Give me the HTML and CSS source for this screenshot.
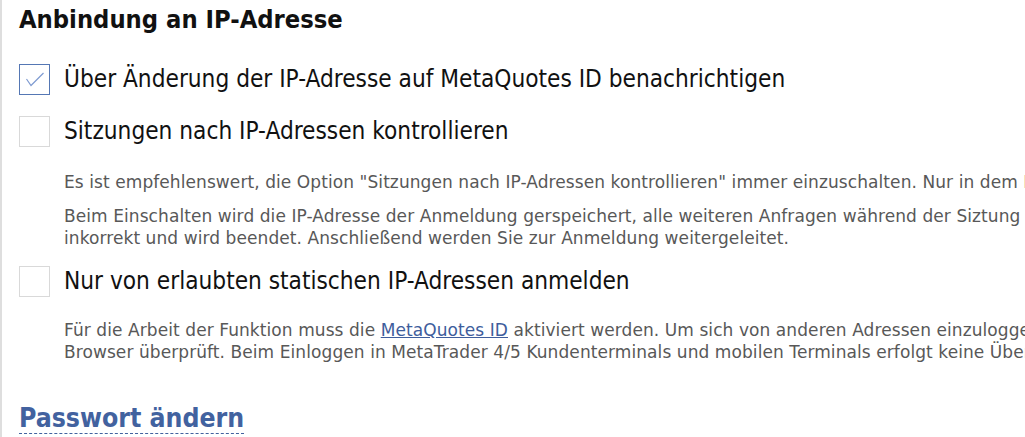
FILE: index.html
```html
<html>
<head>
<meta charset="utf-8">
<link rel="stylesheet" href="styles.css">
</head>
<body>
<div class="wrapper">
  <h2 class="section-title">Anbindung an IP-Adresse</h2>

  <div class="option">
    <span class="checkbox checked">
      <svg width="31" height="31" viewBox="0 0 31 31"><polyline points="7.5,15 12,21.5 24.5,9" fill="none" stroke="#7f9bd1" stroke-width="1.2"/></svg>
    </span>
    <span class="label">Über Änderung der IP-Adresse auf MetaQuotes ID benachrichtigen</span>
  </div>

  <div class="option">
    <span class="checkbox"></span>
    <span class="label">Sitzungen nach IP-Adressen kontrollieren</span>
  </div>

  <div class="hint first">
    <p>Es ist empfehlenswert, die Option "Sitzungen nach IP-Adressen kontrollieren" immer einzuschalten. Nur in dem Fall, wenn Ihr Provider die IP-Adresse ständig ändert, sollte sie ausgeschaltet werden.</p>
    <p>Beim Einschalten wird die IP-Adresse der Anmeldung gerspeichert, alle weiteren Anfragen während der Siztung von anderen IP-Adressen gelten als<br>inkorrekt und wird beendet. Anschließend werden Sie zur Anmeldung weitergeleitet.</p>
  </div>

  <div class="option">
    <span class="checkbox"></span>
    <span class="label">Nur von erlaubten statischen IP-Adressen anmelden</span>
  </div>

  <div class="hint last">
    <p>Für die Arbeit der Funktion muss die <a href="#">MetaQuotes ID</a> aktiviert werden. Um sich von anderen Adressen einzuloggen, wird eine Bestätigung<br>Browser überprüft. Beim Einloggen in MetaTrader 4/5 Kundenterminals und mobilen Terminals erfolgt keine Überprüfung.</p>
  </div>

  <h2 class="section-link"><span>Passwort ändern</span></h2>
</div>
</body>
</html>
```

FILE: styles.css
```css
html, body {
  margin: 0;
  overflow: hidden;
  background: #fff;
  }
body {
  font-family: "DejaVu Sans Condensed", "DejaVu Sans", sans-serif;
  color: #111;
  }
div.wrapper {
  border-left: 2px solid #dedede;
  padding: 4px 0 20px 17px;
  width: 1500px;
  min-height: 437px;
  box-sizing: border-box;
  }
h2.section-title {
  font-size: 25.3px;
  font-weight: bold;
  line-height: 32px;
  margin: 0 0 28px 0;
  }
div.option {
  display: flex;
  align-items: center;
  gap: 14px;
  height: 31px;
  margin-bottom: 21px;
  }
span.checkbox {
  display: block;
  width: 31px;
  height: 31px;
  box-sizing: border-box;
  border: 1px solid #d9d9d9;
  flex: none;
  }
span.checkbox.checked {
  border-color: #5577b4;
  }
span.checkbox svg {
  display: block;
  margin: -1px;
  }
span.label {
  font-size: 24.2px;
  line-height: 31px;
  }
div.hint {
  margin-left: 45px;
  font-family: "DejaVu Sans", sans-serif;
  font-size: 17px;
  letter-spacing: 0.08px;
  line-height: 22px;
  color: #585858;
  white-space: nowrap;
  }
div.hint.first {
  margin-top: 24px;
  margin-bottom: 17px;
  }
div.hint.first p:first-child {
  margin-bottom: 12px;
  }
div.hint.last {
  margin-top: 22px;
  }
div.hint p {
  margin: 0;
  }
div.hint a {
  color: #3e5d9c;
  text-decoration: underline;
  }
h2.section-link {
  font-size: 26.4px;
  font-weight: bold;
  line-height: 32px;
  margin: 39px 0 0 0;
  color: #42629f;
  }
h2.section-link span {
  border-bottom: 1px dashed #42629f;
  }
```
